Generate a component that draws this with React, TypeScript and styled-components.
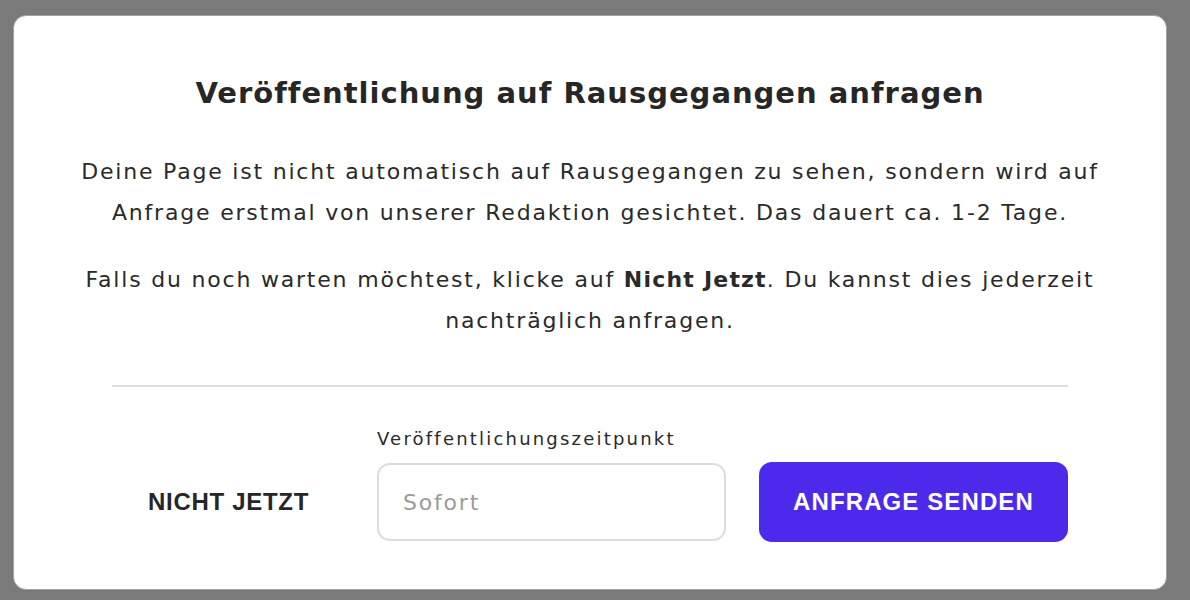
import styled, { createGlobalStyle } from 'styled-components'

const GlobalStyle = createGlobalStyle`
    html, body {
        margin: 0;
        padding: 0;
        background: #7a7a7a;
    }

    body {
        font-family: "DejaVu Sans", "Noto Sans", sans-serif;
        color: #262626;
    }
`

const Backdrop = styled.div`
    width: 1190px;
    height: 600px;
    box-sizing: border-box;
    padding: 15px 23px 10px 13px;
    display: flex;
`

const Modal = styled.div`
    flex: 1;
    background: #ffffff;
    border: 1.5px solid #a3a3a3;
    border-radius: 13px;
    box-sizing: border-box;
    padding: 57px 20px 0;
    display: flex;
    flex-direction: column;
    align-items: center;
`

const Title = styled.h1`
    margin: 0;
    font-family: "DejaVu Sans", "Liberation Sans", sans-serif;
    font-weight: 700;
    font-size: 29px;
    line-height: 40px;
    letter-spacing: 1px;
    color: #262626;
    text-align: center;
`

const Text = styled.p`
    margin: ${(p: { $top: number }) => p.$top}px 0 0;
    font-size: 22px;
    line-height: 41px;
    letter-spacing: 1.8px;
    text-align: center;
    color: #2a2a2a;
    white-space: nowrap;

    b {
        font-weight: 700;
        letter-spacing: 1.2px;
    }
`

const Divider = styled.hr`
    width: 956px;
    margin: 44px 0 0;
    border: none;
    border-top: 2px solid #dedede;
`

const Footer = styled.div`
    width: 956px;
    margin-top: 40px;
    display: flex;
    align-items: flex-end;
`

const GhostButton = styled.button`
    width: 233px;
    height: 80px;
    margin-right: 32px;
    padding: 0;
    background: none;
    border: none;
    font-family: "Liberation Sans", Arial, sans-serif;
    font-weight: 700;
    font-size: 24px;
    color: #262626;
    letter-spacing: 0.7px;
`

const Field = styled.label`
    width: 349px;
    display: flex;
    flex-direction: column;
    gap: 12px;
    margin-right: 33px;
    margin-bottom: 1px;
`

const FieldLabel = styled.span`
    font-size: 18px;
    line-height: 24px;
    letter-spacing: 2.2px;
    color: #2a2a2a;
`

const Input = styled.input`
    height: 78px;
    box-sizing: border-box;
    border: 2px solid #dcdcdc;
    border-radius: 13px;
    padding: 0 24px;
    font-family: "DejaVu Sans", "Noto Sans", sans-serif;
    font-size: 22px;
    letter-spacing: 1.8px;
    color: #262626;
    outline: none;

    &::placeholder {
        color: #9b9b9b;
    }
`

const PrimaryButton = styled.button`
    flex: 1;
    height: 80px;
    border: none;
    border-radius: 13px;
    background: #4b2aeb;
    color: #ffffff;
    font-family: "Liberation Sans", Arial, sans-serif;
    font-weight: 700;
    font-size: 24px;
    letter-spacing: 1.1px;
`

const App = () => {
    return (
        <>
            <GlobalStyle />
            <Backdrop>
                <Modal>
                    <Title>Veröffentlichung auf Rausgegangen anfragen</Title>

                    <Text $top={38}>
                        Deine Page ist nicht automatisch auf Rausgegangen zu sehen, sondern wird auf
                        <br />
                        Anfrage erstmal von unserer Redaktion gesichtet. Das dauert ca. 1-2 Tage.
                    </Text>

                    <Text $top={26}>
                        Falls du noch warten möchtest, klicke auf <b>Nicht Jetzt</b>. Du kannst dies jederzeit
                        <br />
                        nachträglich anfragen.
                    </Text>

                    <Divider />

                    <Footer>
                        <GhostButton>NICHT JETZT</GhostButton>

                        <Field>
                            <FieldLabel>Veröffentlichungszeitpunkt</FieldLabel>
                            <Input placeholder="Sofort" />
                        </Field>

                        <PrimaryButton>ANFRAGE SENDEN</PrimaryButton>
                    </Footer>
                </Modal>
            </Backdrop>
        </>
    )
}

export default App
